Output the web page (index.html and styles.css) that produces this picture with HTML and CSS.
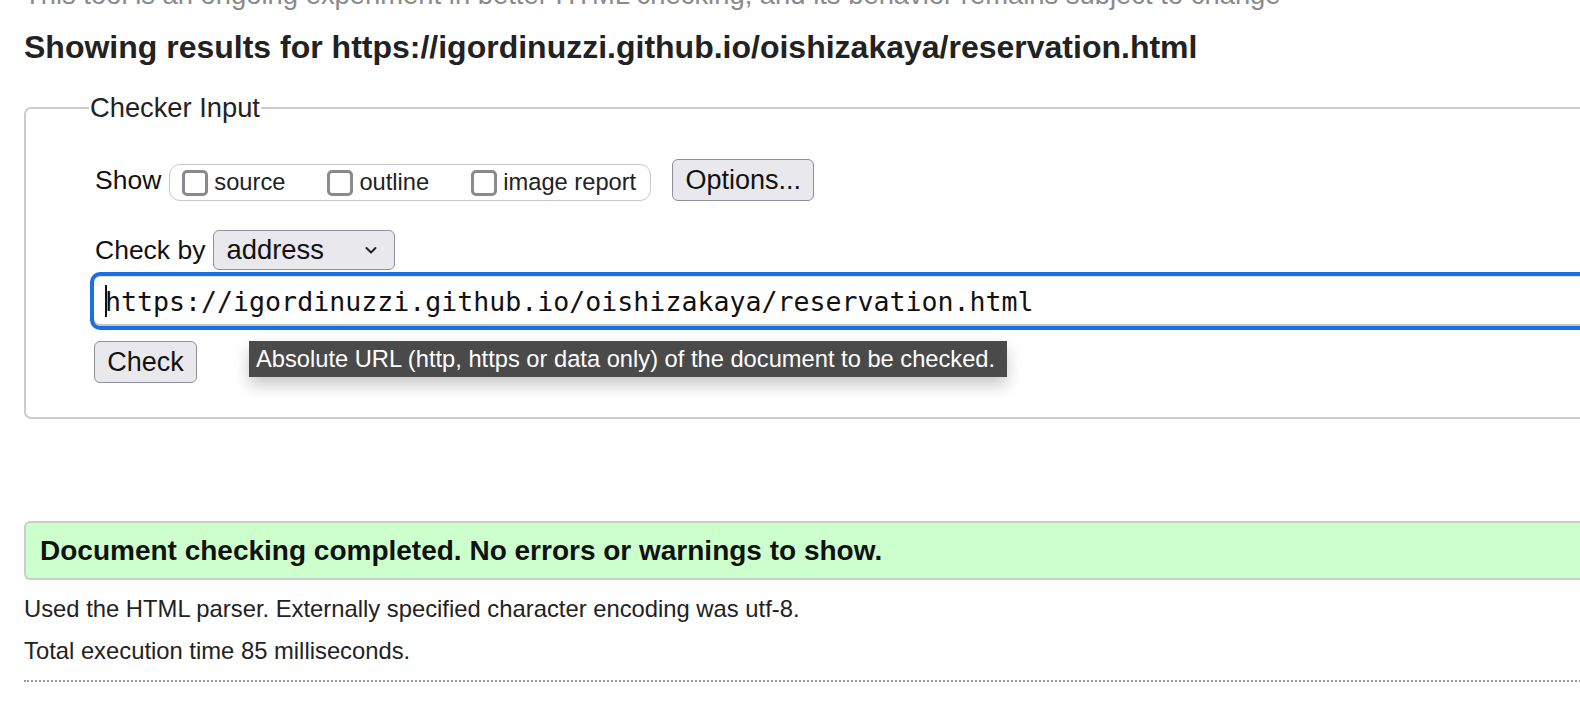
FILE: index.html
```html
<!DOCTYPE html>
<html>
<head>
<meta charset="utf-8">
<link rel="stylesheet" href="styles.css">
</head>
<body>
<p class="intro">This tool is an ongoing experiment in better HTML checking, and its behavior remains subject to change</p>
<h2 class="title">Showing results for https://igordinuzzi.github.io/oishizakaya/reservation.html</h2>
<fieldset class="checker">
  <legend class="legend">Checker Input</legend>
  <div class="row show-row">
    <span class="label">Show</span>
    <div class="pill">
      <span class="opt"><span class="box"></span>source</span>
      <span class="opt"><span class="box"></span>outline</span>
      <span class="opt"><span class="box"></span>image report</span>
    </div>
    <span class="btn options">Options...</span>
  </div>
  <div class="row by-row">
    <span class="label">Check by</span>
    <span class="select">address<svg class="chev" width="14" height="9" viewBox="0 0 14 9"><path d="M2.5 2 L7 6.5 L11.5 2" fill="none" stroke="#222" stroke-width="2" stroke-linecap="round" stroke-linejoin="round"/></svg></span>
  </div>
  <div class="url"><span class="caret"></span>https://igordinuzzi.github.io/oishizakaya/reservation.html</div>
  <div class="row check-row">
    <span class="btn check">Check</span>
    <span class="tooltip">Absolute URL (http, https or data only) of the document to be checked.</span>
  </div>
</fieldset>
<div class="success">Document checking completed. No errors or warnings to show.</div>
<p class="info">Used the HTML parser. Externally specified character encoding was utf-8.</p>
<p class="info second">Total execution time 85 milliseconds.</p>
<div class="dots"></div>
</body>
</html>
```
FILE: styles.css
```css
html, body {
  margin: 0;
  padding: 0;
  background: #fff;
  overflow: hidden;
}
body {
  font-family: "Liberation Sans", Arial, sans-serif;
  color: #222;
  padding-left: 24px;
  width: 1620px;
}
.intro {
  margin: -21px 0 0 0;
  font-size: 27.4px;
  line-height: 32px;
  color: #8a8a8a;
  white-space: nowrap;
}
.title {
  margin: 17px 0 0 0;
  font-size: 32px;
  line-height: 38px;
  font-weight: bold;
  color: #222;
  white-space: nowrap;
}
.checker {
  margin: 26px 0 0 0;
  padding: 0 0 34px 64px;
  border: 2px solid #cccccc;
  border-radius: 7px;
  min-width: 0;
}
.legend {
  font-size: 27.3px;
  line-height: 32px;
  padding: 0 1px;
  margin-left: -1px;
  color: #222;
}
.row {
  display: flex;
  align-items: center;
}
.show-row {
  margin-top: 35px;
  height: 42px;
}
.label {
  font-size: 26.5px;
  color: #111;
  padding-left: 5px;
}
.pill {
  display: flex;
  align-items: center;
  margin-left: 8px;
  margin-top: 5px;
  height: 37px;
  border: 1.5px solid #c8c8c8;
  border-radius: 11px;
  padding: 0 14px 0 12px;
  box-sizing: border-box;
  font-size: 23.7px;
  color: #222;
}
.opt {
  display: flex;
  align-items: center;
  margin-right: 42px;
}
.opt:last-child { margin-right: 0; }
.box {
  width: 26px;
  height: 26px;
  box-sizing: border-box;
  border: 3px solid #8a8a8e;
  border-radius: 5px;
  margin-right: 6px;
  background: #fff;
}
.btn {
  display: inline-flex;
  align-items: center;
  justify-content: center;
  background: #e9e9ed;
  border: 1.5px solid #8f8f9d;
  border-radius: 6px;
  box-sizing: border-box;
  color: #111;
}
.options {
  margin-left: 21px;
  width: 142px;
  height: 42px;
  font-size: 27px;
}
.by-row {
  margin-top: 29px;
  height: 40px;
}
.select {
  display: inline-flex;
  align-items: center;
  justify-content: space-between;
  margin-left: 8px;
  width: 182px;
  height: 40px;
  padding: 0 16px 0 12px;
  box-sizing: border-box;
  background: #e9e9ed;
  border: 1.5px solid #8f8f9d;
  border-radius: 6px;
  font-size: 27.4px;
  color: #111;
}
.url {
  margin-top: 2px;
  height: 58px;
  border: 4px solid #1a6fe3;
  border-right: none;
  border-radius: 10px 0 0 10px;
  box-sizing: border-box;
  display: flex;
  align-items: center;
  padding-left: 11px;
  font-family: "DejaVu Sans Mono", "Liberation Mono", monospace;
  font-size: 26.6px;
  color: #111;
  box-shadow: inset 0 -2px 0 #c4c4c4, inset 0 1px 0 #e0e0e0;
}
.caret {
  display: inline-block;
  width: 2px;
  height: 32px;
  background: #111;
  margin-right: -2px;
}
.check-row {
  margin-top: 11px;
  align-items: flex-start;
}
.check {
  margin-left: 4px;
  width: 103px;
  height: 42px;
  font-size: 27px;
}
.tooltip {
  margin-left: 52px;
  background: #4a4a4a;
  color: #fff;
  font-size: 23.7px;
  padding: 0 12px 0 7px;
  height: 36px;
  line-height: 36px;
  box-shadow: 0 8px 16px rgba(0,0,0,0.22);
  white-space: nowrap;
}
.success {
  margin-top: 102px;
  height: 59px;
  box-sizing: border-box;
  background: #ccffcc;
  border: 2px solid #cccccc;
  border-right: none;
  border-radius: 6px 0 0 6px;
  font-weight: bold;
  font-size: 28px;
  padding-left: 14px;
  display: flex;
  align-items: center;
  color: #111;
}
.info {
  margin: 14px 0 0 0;
  font-size: 23.8px;
  line-height: 30px;
  color: #222;
}
.info.second {
  margin-top: 12px;
}
.dots {
  margin-top: 14px;
  border-top: 2px dotted #999;
}
```
